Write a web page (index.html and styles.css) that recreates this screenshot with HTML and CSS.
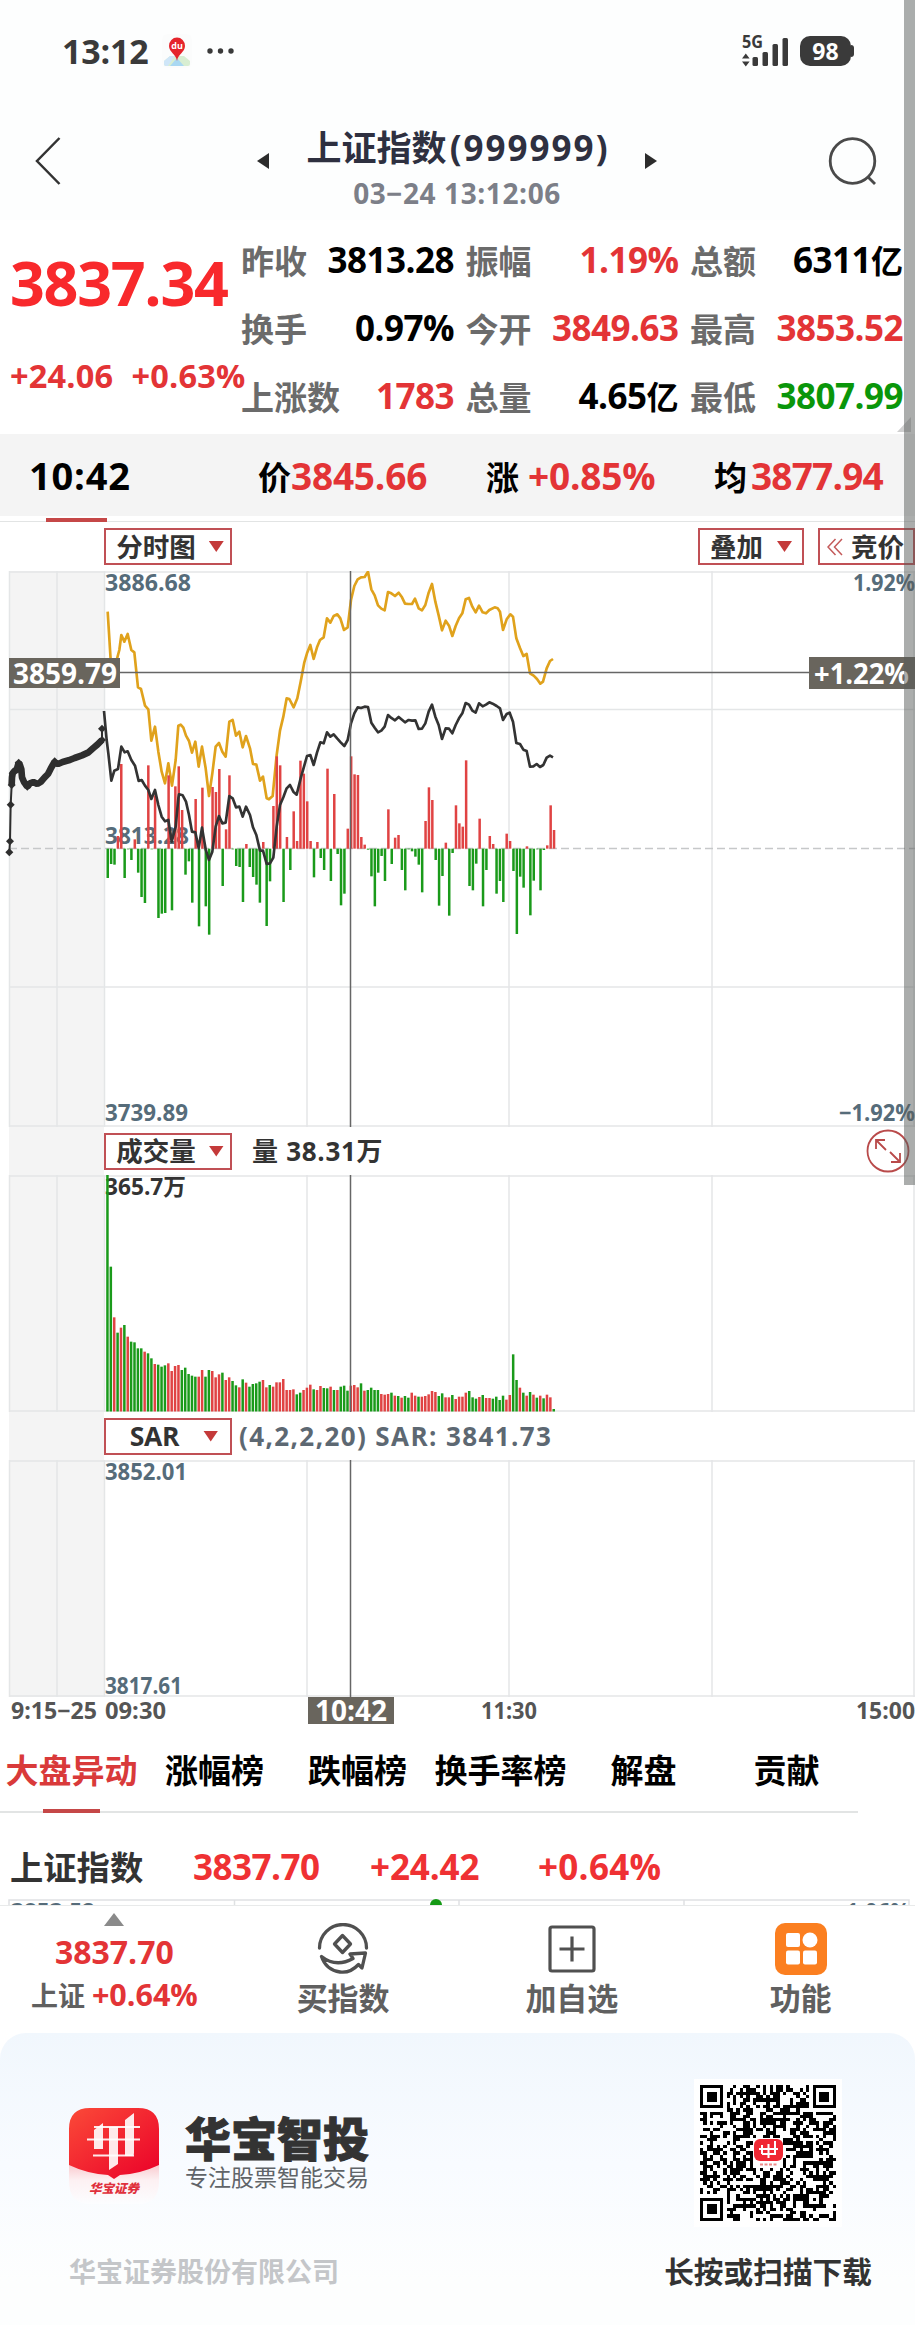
FILE: index.html
```html
<!DOCTYPE html>
<html lang="zh-CN">
<head>
<meta charset="utf-8">
<title>上证指数</title>
<link rel="stylesheet" href="styles.css">
</head>
<body>
<div class="page">
  <header class="status">
    <div class="status-left">
      <span class="clock">13:12</span>
      <svg class="map-icon" width="30" height="34" viewBox="0 0 30 34">
        <rect width="30" height="34" rx="6" fill="#fbfcfc"/>
        <path d="M2 27 L8 22 H22 L28 27 V30 Q28 32 26 32 H4 Q2 32 2 30Z" fill="#d8eed2"/>
        <path d="M2 27 L8 22 L13 22 L6 32 H4 Q2 32 2 30Z" fill="#cfe6f8"/>
        <path d="M15 24 L22 32 H8Z" fill="#a9d8f2"/>
        <path d="M15 27 C14 20 7 18 7 12 A8 8.500 0 0 1 23 12 C23 18 16 20 15 27Z" fill="#e5252c"/>
        <text x="15" y="15" class="map-text">du</text>
      </svg>
      <svg width="28" height="8" viewBox="0 0 28 8" fill="#3a3a3a"><circle cx="3" cy="4" r="2.7"/><circle cx="13.500" cy="4" r="2.700"/><circle cx="24" cy="4" r="2.700"/></svg>
    </div>
    <div class="status-right">
      <svg width="50" height="36" viewBox="0 0 50 36" fill="#3a3a3a">
        <text x="1" y="14.500" class="net-text" textLength="21" lengthAdjust="spacingAndGlyphs">5G</text>
        <path d="M1 25.500 L4.800 20.500 L8.600 25.500Z M1 28.500 L4.800 33.500 L8.600 28.500Z"/>
        <rect x="11.500" y="24" width="5.500" height="9" rx="1.500"/><rect x="21.500" y="19" width="5.500" height="14" rx="1.500"/><rect x="31.500" y="11" width="5.500" height="22" rx="1.500"/><rect x="41.500" y="5" width="5.500" height="28" rx="1.500"/>
      </svg>
      <span class="battery">98</span>
      <i class="battery-tip"></i>
    </div>
  </header>

  <nav class="nav">
    <svg width="26" height="48" viewBox="0 0 26 48" fill="none" stroke="#333" stroke-width="2.500"><path d="M24.500 1 L2 24 L24.500 47"/></svg>
    <div class="nav-title">
      <svg width="13" height="16" viewBox="0 0 13 16"><path d="M12 0 V16 L0 8Z" fill="#2c2c2c"/></svg>
      <div class="title-stack">
        <h1><span class="t-cn">上证指数</span><span class="t-num">(999999)</span></h1>
        <p>03−24 13:12:06</p>
      </div>
      <svg width="13" height="16" viewBox="0 0 13 16"><path d="M0 0 V16 L12 8Z" fill="#2c2c2c"/></svg>
    </div>
    <svg width="50" height="50" viewBox="0 0 50 50" fill="none" stroke="#4a4a4a" stroke-width="2.800"><circle cx="24.500" cy="25" r="22.300"/><path d="M40 41 L47 48"/></svg>
  </nav>

  <section class="quote">
    <div class="last">
      <div class="last-price">3837.34</div>
      <div class="last-change"><span>+24.06</span><span>+0.63%</span></div>
    </div>
    <div class="stats">
      <div class="stat"><span>昨收</span><b>3813.28</b></div>
      <div class="stat"><span>振幅</span><b class="up">1.19%</b></div>
      <div class="stat"><span>总额</span><b>6311<small>亿</small></b></div>
      <div class="stat"><span>换手</span><b>0.97%</b></div>
      <div class="stat"><span>今开</span><b class="up">3849.63</b></div>
      <div class="stat"><span>最高</span><b class="up">3853.52</b></div>
      <div class="stat"><span>上涨数</span><b class="up">1783</b></div>
      <div class="stat"><span>总量</span><b>4.65<small>亿</small></b></div>
      <div class="stat"><span>最低</span><b class="down">3807.99</b></div>
    </div>
    <svg class="corner" width="14" height="15" viewBox="0 0 14 15"><path d="M14 0 V15 H0Z" fill="#d0d0d0"/></svg>
  </section>

  <section class="cursor-bar">
    <div class="c-time">10:42</div>
    <div class="c-price">价<b>3845.66</b></div>
    <div class="c-pct">涨<b>+0.85%</b></div>
    <div class="c-avg">均<b>3877.94</b></div>
  </section>
  <div class="period-line"><i></i></div>

  <section class="charts">
    <div class="toolbar first">
      <button class="pick w-main">分时图<i class="tri"></i></button>
      <span class="spacer"></span>
      <button class="pick w-add">叠加<i class="tri"></i></button>
      <button class="pick w-bid"><svg width="16" height="18" viewBox="0 0 16 18" fill="none" stroke="#c45a5a" stroke-width="1.500"><path d="M8.500 1 L1 9 L8.500 17 M15 1 L7.500 9 L15 17"/></svg>竞价</button>
    </div>
    <svg class="panel" id="price" width="915" height="556" viewBox="0 571 915 556"></svg>
    <div class="toolbar">
      <button class="pick w-main">成交量<i class="tri"></i></button>
      <span class="readout dark">量 38.31万</span>
      <span class="spacer"></span>
      <svg class="expand" width="44" height="44" viewBox="0 0 44 44" fill="none" stroke="#b94a4a" stroke-width="1.800"><circle cx="22" cy="22" r="20.500"/><path d="M10 20 V11 H19 M10 11 L20 21 M34 24 V33 H25 M34 33 L24 23"/></svg>
    </div>
    <svg class="panel" id="volume" width="915" height="237" viewBox="0 1175 915 237"></svg>
    <div class="toolbar">
      <button class="pick w-main sar">SAR<i class="tri"></i></button>
      <span class="readout slate">(4,2,2,20) SAR: 3841.73</span>
    </div>
    <svg class="panel" id="sar" width="915" height="237" viewBox="0 1460 915 237"></svg>
  </section>
  <svg class="axis" id="axis" width="915" height="33" viewBox="0 1697 915 33"></svg>

  <nav class="tabs">
    <a class="on">大盘异动</a><a>涨幅榜</a><a>跌幅榜</a><a>换手率榜</a><a>解盘</a><a>贡献</a>
  </nav>

  <section class="index-row">
    <span class="i-name">上证指数</span><span class="i-a">3837.70</span><span class="i-b">+24.42</span><span class="i-c">+0.64%</span>
  </section>
  <div class="mini">
    <svg width="915" height="7" viewBox="0 0 915 7">
      <path d="M9 7 V1 H909 V7 M234.500 1 V7 M459 1 V7 M684 1 V7" fill="none" stroke="#dfe1e3" stroke-width="1.500"/>
      <circle cx="436" cy="6" r="6" fill="#159a15"/>
      <text x="11" y="20.500" class="lab" textLength="84" lengthAdjust="spacingAndGlyphs">3853.52</text>
      <text x="846" y="20.500" class="lab" textLength="64" lengthAdjust="spacingAndGlyphs">1.06%</text>
    </svg>
  </div>

  <nav class="dock">
    <div class="dock-item quote-item">
      <svg width="20" height="13" viewBox="0 0 20 13"><path d="M10 0 L20 13 H0Z" fill="#8a8a8a"/></svg>
      <b>3837.70</b>
      <p>上证 <em>+0.64%</em></p>
    </div>
    <div class="dock-item">
      <svg width="52" height="52" viewBox="0 0 52 52" fill="none" stroke="#505050" stroke-width="3.300" stroke-linejoin="round" stroke-linecap="round"><path d="M2.500 25 A23.500 23.500 0 0 1 49.500 25"/><path d="M25.500 12.500 L33.500 21 L25.500 29.500 L17.500 21Z"/><path d="M4.500 33.500 Q19 45 36 35.500 L33 31 L48.500 30 L45 45 L41.500 41.500 Q33 50.500 23 49 Q9 47 4.500 33.500Z"/></svg>
      <span>买指数</span>
    </div>
    <div class="dock-item">
      <svg width="52" height="52" viewBox="0 0 52 52" fill="none" stroke="#505050" stroke-width="3.200"><rect x="4" y="4" width="44" height="44" rx="2"/><path d="M26 13.500 V38.500 M13.500 26 H38.500"/></svg>
      <span>加自选</span>
    </div>
    <div class="dock-item">
      <svg width="52" height="52" viewBox="0 0 52 52"><rect width="52" height="52" rx="10" fill="#fb7f20"/><g fill="#fff"><rect x="11" y="10" width="14" height="14" rx="2"/><circle cx="35" cy="17" r="7.500"/><rect x="11" y="27.500" width="14" height="14" rx="2"/><rect x="28" y="27.500" width="14" height="14" rx="2"/></g></svg>
      <span>功能</span>
    </div>
  </nav>

  <footer class="promo">
    <div class="brand">
      <svg width="92" height="102" viewBox="0 0 92 102">
        <defs>
          <linearGradient id="red" x1="0" y1="0" x2="1" y2="1"><stop offset="0" stop-color="#fb4a38"/><stop offset="1" stop-color="#ea0029"/></linearGradient>
          <linearGradient id="pale" x1="0" y1="0" x2="0" y2="1"><stop offset="0.150" stop-color="#f9c9cd"/><stop offset="0.500" stop-color="#fdf1f3"/><stop offset="1" stop-color="#fcfdff"/></linearGradient>
        </defs>
        <path id="plate" d="M1 50 V74 Q1 97 22 97 H70 Q91 97 91 74 V50Z" fill="url(#pale)"/>
        <path d="M1 22 Q1 1 22 1 H70 Q91 1 91 22 V58 Q72 67 52 68 L46 72 L40 68 Q20 67 1 58Z" fill="url(#red)"/>
        <g fill="#fff" fill-opacity=".9"><path d="M26 23 L35 16 V42 H26Z M41 20 H50 V57 L41 63Z M57 13 L66 6 V46 Q66 49 63 49 H57Z"/><path d="M26 19 H72 V21 H26Z M19 31.500 H72 V33.500 H19Z M25 47.500 H66 V49.500 H25Z"/></g>
        <text x="46" y="86" class="logo-text">华宝证券</text>
      </svg>
      <div class="brand-text"><strong>华宝智投</strong><span>专注股票智能交易</span></div>
      <svg class="qr" id="qr" width="148" height="148" viewBox="-6 -6 148 148"></svg>
    </div>
    <div class="legal"><span>华宝证券股份有限公司</span><b>长按或扫描下载</b></div>
  </footer>
  <div class="scrollbar"></div>
</div>
<script src="charts.js"></script>
</body>
</html>
```
FILE: styles.css
```css
* { box-sizing: border-box; }
body { margin: 0; background: #fdfefe; }
.page {
  position: relative;
  width: 915px;
  height: 2325px;
  overflow: hidden;
  background: #fff;
  font-family: "Open Sans", "Noto Sans CJK SC", sans-serif;
  font-weight: 700;
  color: #111;
}
svg { display: block; flex: none; }
h1, p { margin: 0; }
b { font-weight: 700; }

.status {
  height: 102px;
  padding: 0 61px 0 62px;
  display: flex;
  align-items: center;
  justify-content: space-between;
  background: #fdfefe;
}
.status-left, .status-right { display: flex; align-items: center; }
.clock { width: 100px; font-size: 34px; letter-spacing: -0.2px; line-height: 40px; color: #3a3a3a; }
.map-icon { margin-right: 15px; }
.map-text { font: 700 9px "Open Sans", sans-serif; fill: #fff; text-anchor: middle; }
.net-text { font: 700 17px "Open Sans", sans-serif; fill: #3a3a3a; }
.battery {
  width: 51px; height: 30px; margin-left: 9px;
  border-radius: 10px; background: #3a3a3a; color: #fff;
  font-size: 23px; line-height: 30px; text-align: center;
}
.battery-tip { width: 3px; height: 12px; border-radius: 0 3px 3px 0; background: #3a3a3a; }

.nav {
  height: 118px;
  padding: 0 37px 0 35px;
  display: flex;
  align-items: center;
  justify-content: space-between;
  background: #fdfefe;
}
.nav-title { display: flex; align-items: center; gap: 37px; margin-right: -25px; }
.title-stack { text-align: center; padding-top: 15px; width: 301px; }
.nav h1 { display: flex; justify-content: space-between; font-size: 35px; line-height: 48px; color: #2e3040; white-space: nowrap; }
.t-num { letter-spacing: 2px; margin-right: -2px; }
.nav p { font-size: 28px; line-height: 42px; letter-spacing: 0.6px; color: #7c7f88; white-space: nowrap; }

.quote { position: relative; height: 214px; display: flex; }
.last { width: 241px; padding-left: 10px; color: #f8292c; white-space: nowrap; }
.last-price { margin-top: 23px; font-size: 61px; line-height: 80px; letter-spacing: -1.3px; }
.last-change { margin-top: 31px; display: flex; gap: 18px; font-size: 32.500px; line-height: 44px; letter-spacing: 0.2px; color: #e33436; }
.stats {
  width: 662px;
  display: grid;
  grid-template-columns: repeat(3, 213px);
  grid-template-rows: repeat(3, 68px);
  column-gap: 11.500px;
  padding-top: 6px;
}
.stat { display: flex; justify-content: space-between; align-items: center; font-size: 33px; white-space: nowrap; }
.stat span { color: #6b6b6b; }
.stat b { font-size: 35px; line-height: 48px; letter-spacing: -0.5px; color: #000; }
.stat small { font-size: 32px; letter-spacing: 0; }
.stat b.up { color: #e33436; }
.stat b.down { color: #0a960a; }
.corner { position: absolute; left: 897px; top: 197px; }

.cursor-bar {
  height: 82px;
  display: grid;
  grid-template-columns: 258px 228px 228px 1fr;
  align-items: center;
  background: #f4f4f4;
  font-size: 33px;
  color: #000;
  white-space: nowrap;
}
.cursor-bar b { font-size: 37px; letter-spacing: -0.2px; color: #e33436; }
.c-time { padding-left: 29px; font-size: 38px; letter-spacing: 0.8px; }
.c-pct b { margin-left: 9px; }
.c-avg b { margin-left: 4px; letter-spacing: -0.8px; }
.period-line { height: 6px; border-bottom: 1px solid #e2e4e4; padding: 2px 0 0 46px; }
.period-line i { display: block; width: 61px; height: 4px; background: #c54747; }

.charts { background: linear-gradient(to right, #fff 9px, #f4f4f4 9px, #f4f4f4 104px, #fff 104px); }
.toolbar { height: 48px; padding-left: 104px; display: flex; align-items: center; }
.toolbar.first { height: 49px; background: #fff; }
.spacer { flex: 1; }
.pick {
  height: 37px; padding: 0; border: 2px solid #c05055; background: #fff;
  display: flex; align-items: center; justify-content: center;
  font: 700 26.500px/34px "Open Sans", "Noto Sans CJK SC", sans-serif; color: #333; white-space: nowrap;
}
.w-main { width: 128px; gap: 13px; padding-left: 4px; }
.w-add { width: 106px; gap: 14px; margin-right: 14px; }
.w-bid { width: 97px; gap: 8px; padding-right: 2px; }
.sar { gap: 24px; padding-left: 12px; letter-spacing: -0.3px; }
.tri { width: 15px; height: 11px; background: #c43a3a; clip-path: polygon(0 0, 100% 0, 50% 100%); }
.readout { font-size: 26px; line-height: 40px; white-space: nowrap; }
.readout.dark { margin-left: 20px; color: #333; letter-spacing: 0.7px; }
.readout.slate { margin-left: 7px; color: #5d6872; letter-spacing: 1.4px; }
.expand { margin-right: 5px; }

.lab { font: 700 23px "Open Sans", "Noto Sans CJK SC", sans-serif; fill: #566c7a; }
.lab.ink { fill: #333; }
.lab.axis-lab { fill: #555; }
.tag { font: 700 28px "Open Sans", sans-serif; fill: #fff; }

.tabs {
  width: 858px; height: 83px; display: grid; grid-template-columns: repeat(6, 143px);
  border-bottom: 2px solid #e2e4e4;
  font-size: 33px; line-height: 82px; text-align: center; color: #000; white-space: nowrap;
}
.tabs .on { color: #d93a3a; display: flex; flex-direction: column; align-items: center; }
.tabs .on::after { content: ""; width: 57px; height: 4px; margin-top: -3px; background: #c54747; }

.index-row { height: 86px; padding: 20px 0 0 10px; display: flex; line-height: 68px; font-size: 35px; color: #ef3133; white-space: nowrap; letter-spacing: -0.1px; }
.i-name { width: 183px; font-size: 33.300px; letter-spacing: 0; color: #333; }
.i-a { width: 177px; letter-spacing: -0.5px; }
.i-b { width: 168px; }
.i-c { letter-spacing: 0.3px; }
.mini { height: 7px; overflow: hidden; border-bottom: 1px solid #e8eaea; }

.dock { height: 127px; display: grid; grid-template-columns: repeat(4, 1fr); color: #606060; }
.dock-item { display: flex; flex-direction: column; align-items: center; padding-top: 17px; font-size: 31px; line-height: 46px; white-space: nowrap; }
.quote-item { padding-top: 7px; font-size: 27px; line-height: 42px; }
.quote-item b { margin-top: 5px; font-size: 32px; color: #e33436; }
.quote-item em { font-style: normal; font-size: 30.500px; color: #e33436; }

.promo { height: 292px; padding: 46px 43px 0 68px; border-radius: 26px 26px 0 0; background: linear-gradient(#f1f7fd, #f8fbff 45%, #fdfefe 85%); }
.brand { display: flex; align-items: flex-start; }
.brand > svg:first-child { margin-top: 28px; }
.brand-text { margin: 32px 0 0 25px; width: 190px; display: flex; flex-direction: column; white-space: nowrap; }
.brand-text strong { font-size: 46px; line-height: 54px; font-weight: 900; color: #333; -webkit-text-stroke: 1px #333; }
.brand-text span { font-size: 23px; line-height: 34px; margin-top: -5px; font-weight: 400; color: #606468; }
.qr { margin-left: 319px; }
.logo-text { font: italic 900 12.500px "Noto Sans CJK SC", sans-serif; fill: #e0303c; text-anchor: middle; }
.legal { display: flex; justify-content: space-between; margin-top: 24px; line-height: 42px; white-space: nowrap; }
.legal span { font-size: 27px; color: #c4c6c9; padding-left: 1px; }
.legal b { font-size: 29.700px; color: #333; }

.scrollbar { position: absolute; top: 0; right: 0; width: 11px; height: 1185px; background: rgba(88, 92, 90, 0.5); }
```
FILE: charts.js
```js
const put = (id, html) => { document.getElementById(id).innerHTML = html; };
const STEP = 3.381;
const RED = '#e04343', GREEN = '#1a9a1a';
const line = (x1, y1, x2, y2, c, w = 1.5) =>
  `<path d="M${x1} ${y1}L${x2} ${y2}" stroke="${c}" stroke-width="${w}" fill="none"/>`;
const label = (x, y, len, s, cls = 'lab') =>
  `<text x="${x}" y="${y}" class="${cls}" textLength="${len}" lengthAdjust="spacingAndGlyphs">${s}</text>`;
const GRID = '#e4e6e7', CROSS = '#666';

function grid(top, bottom, rows = []) {
  let s = '';
  for (const x of [9.5, 57, 104.5, 307, 509, 712, 914]) s += line(x, top, x, bottom, GRID);
  for (const y of [top + 1, bottom - 1, ...rows]) s += line(9, y, 915, y, GRID);
  return s;
}

/* Minute-by-minute momentum, in thirds of a pixel around the previous close */
const momentum = [-88,-46,-48,38,254,-88,0,-34,28,-72,-145,-163,250,0,160,-208,-195,-193,220,-185,187,247,116,-78,-38,-162,149,-233,183,-173,-258,185,170,239,-112,58,220,0,-52,-55,-160,14,-55,-85,-108,-162,20,-232,-98,128,277,250,-160,35,-64,112,23,264,225,142,23,-86,20,-28,-64,240,-97,164,-16,-170,-135,60,277,223,221,35,12,-3,-83,-173,-72,-22,-97,118,-46,33,41,-64,-125,0,-8,-24,-48,-131,83,184,146,-34,-171,-82,18,-201,-13,130,76,66,265,-112,-125,-45,90,-173,-64,38,14,-135,-97,-160,45,23,-67,-256,-84,-117,7,-200,-96,0,-125,-4,10,130,56];

const average = '53,155 62,300 80,300 88,270 94,225 103,245 113,222 124,270 133,277 144,382 153,387 165,437 175,448 184,542 195,500 205,575 215,635 225,670 235,610 246,677 257,600 265,497 272,494 280,503 288,527 297,543 306,578 316,545 326,620 336,560 347,625 357,708 367,640 377,560 387,549 397,575 407,590 418,485 428,480 438,527 448,515 458,562 468,528 480,565 489,612 499,614 510,662 519,650 530,715 537,718 548,708 560,585 570,512 580,470 590,415 598,417 611,442 622,415 632,365 643,307 651,280 661,255 671,297 681,262 690,240 701,232 711,175 721,188 731,168 742,163 751,175 762,210 773,202 783,120 793,78 803,58 813,52 824,51 834,35 844,88 854,106 864,136 874,146 884,151 894,96 904,100 915,108 926,98 936,112 945,131 955,132 966,132 975,116 986,145 996,151 1006,135 1016,98 1026,72 1036,125 1046,166 1056,211 1067,182 1077,197 1087,228 1097,198 1107,175 1117,160 1127,118 1137,114 1147,140 1157,157 1167,137 1178,157 1188,160 1198,150 1214,142 1223,145 1230,155 1239,210 1250,178 1261,163 1269,170 1279,235 1290,264 1300,288 1310,282 1320,340 1331,347 1341,357 1351,371 1359,365 1370,325 1380,303 1389,297';
const price = '42,453 50,540 55,580 64,662 73,632 84,627 94,560 104,577 113,574 124,600 135,617 146,663 155,660 165,677 175,690 184,717 195,690 205,735 215,770 225,784 235,780 245,845 257,800 265,715 267,703 278,706 288,725 297,765 306,815 316,817 326,865 336,803 347,868 357,900 367,875 377,800 387,768 397,790 407,788 418,708 428,715 438,742 448,740 458,770 468,740 480,765 489,802 499,825 510,872 519,872 530,912 540,910 550,893 560,800 570,735 580,712 590,685 600,675 610,695 620,704 632,655 642,620 651,588 661,585 671,615 681,578 691,547 701,550 711,517 721,530 731,523 742,536 752,547 763,558 773,540 783,490 793,460 803,442 813,444 824,440 834,441 844,488 854,503 864,517 874,512 884,500 894,465 904,474 915,481 926,471 945,487 956,480 966,482 976,481 986,507 996,506 1006,490 1016,455 1026,434 1036,470 1046,495 1056,537 1067,505 1077,506 1087,520 1097,495 1107,475 1117,460 1127,429 1137,434 1147,452 1157,458 1167,430 1178,439 1188,434 1198,427 1208,431 1220,438 1230,445 1239,480 1250,462 1259,458 1269,485 1279,549 1290,552 1300,569 1310,573 1320,620 1330,619 1340,612 1350,621 1360,615 1370,593 1380,587 1389,592';
const auction = '35,285 36,262 38,250 44,242 50,240 56,218 60,226 64,238 66,262 72,276 82,290 90,280 100,276 112,282 122,276 134,262 144,252 152,236 160,222 166,218 174,222 188,216 206,211 224,204 246,196 264,188 280,174 292,164 306,150';

let s = grid(571, 1127, [709.5, 987]);
s += '<path d="M9 848.500H915" stroke="#c6c8c9" stroke-width="1.500" stroke-dasharray="8 4"/>';
s += label(105, 590.5, 86, '3886.68') + label(853, 590.5, 62, '1.92%');
s += label(105, 844, 84, '3813.28');
s += label(105, 1120.5, 83, '3739.89') + label(839, 1120.5, 76, '−1.92%');
const smooth = (pts, c) => `<polyline points="${pts}" fill="none" stroke="${c}" stroke-width="8" stroke-linejoin="round"/>`;
s += `<g transform="translate(90 560) scale(.33333)">${smooth(average, '#e0a21c')}`;
momentum.forEach((v, i) => {
  const x = 49.5 + i * STEP * 3;
  s += `<rect x="${x}" y="${v > 0 ? 866 - v : 866}" width="7.500" height="${Math.max(2, Math.abs(v))}" fill="${v > 0 ? RED : GREEN}"/>`;
});
s += smooth(price, '#333') + '</g>';
s += `<g transform="translate(0 690) scale(.33333)"><path d="M28 487L30 454L32 344L35 285M306 150V116" stroke="#2e2e2e" stroke-width="6"/>
<polyline points="${auction}" fill="none" stroke="#2e2e2e" stroke-width="20" stroke-linejoin="bevel"/>`;
for (const [x, y] of [[28,487],[30,454],[32,344],[35,285],[38,250],[56,218],[82,290],[164,214],[306,150],[306,116]])
  s += `<path d="M${x - 12} ${y}L${x} ${y - 12}L${x + 12} ${y}L${x} ${y + 12}Z" fill="#2e2e2e"/>`;
s += '</g>';
s += line(350.5, 571, 350.5, 1127, CROSS) + line(9, 672.5, 915, 672.5, CROSS);
s += '<rect x="9" y="658" width="111" height="30" fill="#69655d"/>' + label(13, 683.5, 104, '3859.79', 'tag');
s += '<rect x="809" y="657" width="106" height="32" fill="#69655d"/>' + label(814, 683.5, 95, '+1.22%', 'tag');
put('price', s);

/* Volume: y of each bar's top (offset from 1090, thirds of a pixel) and its direction */
const tops = [255,530,682,728,713,705,740,755,757,775,775,785,790,805,822,824,830,826,820,843,828,825,840,833,852,857,860,860,840,860,840,843,862,853,848,870,862,873,886,892,868,878,890,882,880,875,870,892,885,890,877,877,867,900,900,898,913,908,900,893,884,898,900,888,894,895,890,900,900,890,887,902,887,885,892,880,902,900,893,900,900,912,914,912,908,917,918,923,918,923,908,917,920,920,918,913,903,906,918,910,922,922,915,927,920,920,908,903,922,926,921,915,924,924,926,920,930,917,929,915,793,870,893,908,917,906,914,923,917,925,914,922,957];
const dirs = 'ggrgrgrggggrggrggg' + 'rrrrgggggr' + 'rggrrrgrrggrgrggggrrgrrrrrrrggrrrgrrggrgrgggrrrgrggggrrrgrgrggrrgrrrrrggrrgrrrrgggrgrrggggrrggrgrgrgrgrrg';
s = grid(1175, 1412);
s += label(105, 1195, 81, '365.7万', 'lab ink');
tops.forEach((t, i) => {
  const y = 1090 + t / 3;
  s += `<rect x="${106.2 + i * STEP}" y="${y}" width="2.500" height="${1411.5 - y}" fill="${dirs[i] === 'r' ? RED : GREEN}"/>`;
});
s += line(350.5, 1175, 350.5, 1412, CROSS);
put('volume', s);

s = grid(1460, 1697) + line(350.5, 1460, 350.5, 1697, CROSS);
s += label(105, 1480, 82, '3852.01') + label(105, 1694, 77, '3817.61');
put('sar', s);

s = label(11, 1719, 86, '9:15−25', 'lab axis-lab') + label(105, 1719, 61, '09:30', 'lab axis-lab');
s += label(481, 1719, 56, '11:30', 'lab axis-lab') + label(856, 1719, 59, '15:00', 'lab axis-lab');
s += '<rect x="308" y="1696" width="86" height="28" fill="#69655d"/>' + label(315, 1720.5, 72, '10:42', 'tag');
put('axis', s);

/* QR symbol: 41 modules with three finder patterns and one alignment mark */
const N = 41, M = 136 / N;
let seed = 20250324, d = '';
const rnd = () => (seed = (seed * 1103515245 + 12345) % 2147483648) / 2147483648;
const ring = (x, y, n) => Math.max(Math.abs(x - n), Math.abs(y - n));
for (let y = 0; y < N; y++) for (let x = 0; x < N; x++) {
  let on = rnd() > 0.47;
  const fx = x > 20 ? N - 1 - x : x, fy = y > 20 ? N - 1 - y : y;
  if (fx < 8 && fy < 8 && !(x > 20 && y > 20)) { const r = ring(fx, fy, 3); on = r !== 2 && r < 4; }
  const a = Math.max(Math.abs(x - 34), Math.abs(y - 34));
  if (a < 3) on = a !== 1;
  if (x > 15 && x < 25 && y > 15 && y < 25) on = false;
  if (on) d += `M${(x * M).toFixed(2)} ${(y * M).toFixed(2)}h${M.toFixed(2)}v${M.toFixed(2)}h-${M.toFixed(2)}z`;
}
put('qr', `<rect x="-6" y="-6" width="148" height="148" fill="#fff"/><path d="${d}" fill="#000" shape-rendering="crispEdges"/>
<rect x="54" y="54" width="29" height="28" rx="5" fill="#fff"/><rect x="54" y="54" width="29" height="22" rx="6" fill="#f02834"/>
<path d="M62 60v9M68.500 59v14M75 56v13M59 64h19M62 69h14" stroke="#fff" stroke-width="2" fill="none"/><path d="M60 79.500h17" stroke="#e88" stroke-width="2" stroke-dasharray="3 1.500"/>`);
```
